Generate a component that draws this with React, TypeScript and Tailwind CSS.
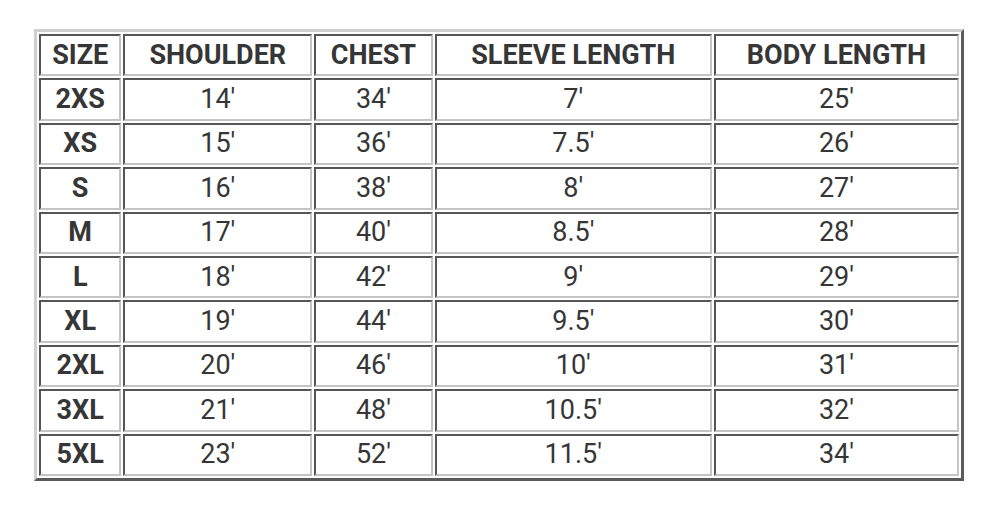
import React from "react";

const headers = ["SIZE", "SHOULDER", "CHEST", "SLEEVE LENGTH", "BODY LENGTH"];
const widths = ["w-[82px]", "w-[188px]", "w-[118px]", "w-[276px]", "w-[244px]"];

const rows = [
  ["2XS", "14'", "34'", "7'", "25'"],
  ["XS", "15'", "36'", "7.5'", "26'"],
  ["S", "16'", "38'", "8'", "27'"],
  ["M", "17'", "40'", "8.5'", "28'"],
  ["L", "18'", "42'", "9'", "29'"],
  ["XL", "19'", "44'", "9.5'", "30'"],
  ["2XL", "20'", "46'", "10'", "31'"],
  ["3XL", "21'", "48'", "10.5'", "32'"],
  ["5XL", "23'", "52'", "11.5'", "34'"],
];

const cell =
  "h-[42.4px] p-0 text-center align-middle leading-none border-2 border-t-[#555] border-l-[#555] border-b-[#c4c4c4] border-r-[#c4c4c4]";

export default function App() {
  return (
    <div className="w-[1000px] h-[513px] bg-white pt-[29px] pl-[34px] font-['Roboto',sans-serif] text-[#363636]">
      <table className="table-fixed border-separate border-spacing-[2px] border-[3px] border-t-[#cfcfcf] border-l-[#cfcfcf] border-b-[#5a5a5a] border-r-[#5a5a5a] w-[930px]">
        <thead>
          <tr>
            {headers.map((h, i) => (
              <th key={h} className={`${cell} ${widths[i]} text-[27px] font-bold`}>
                {h}
              </th>
            ))}
          </tr>
        </thead>
        <tbody>
          {rows.map((r) => (
            <tr key={r[0]}>
              {r.map((v, i) => (
                <td
                  key={i}
                  className={`${cell} text-[27px] ${i === 0 ? "font-bold" : "font-normal"}`}
                >
                  {v}
                </td>
              ))}
            </tr>
          ))}
        </tbody>
      </table>
    </div>
  );
}
